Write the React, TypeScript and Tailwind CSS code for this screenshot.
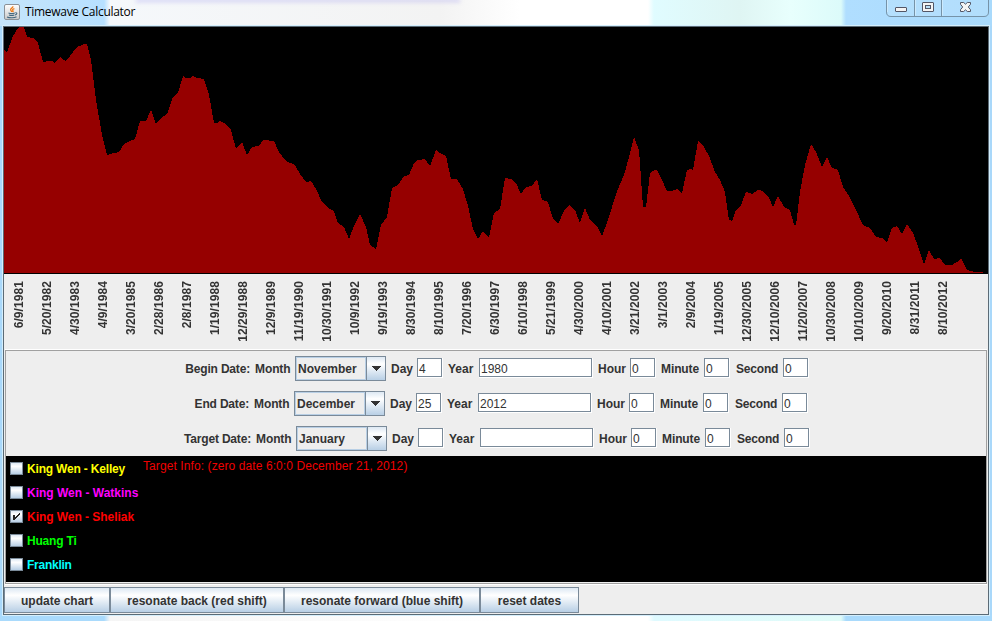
import React from 'react';
import { clsx } from 'clsx';

// Upper edge of the wave, in window coordinates
const WAVE: [number, number][] = [
  [4, 50], [7, 53], [10, 44], [13, 36], [18, 28], [19, 27], [24, 27], [27, 37], [33, 38], [38, 43], [43, 62],
  [48, 61], [52, 61], [55, 63], [60, 57], [62, 59], [66, 61], [70, 56], [77, 47], [82, 45], [84, 44], [87, 44],
  [91, 60], [96, 100], [102, 135], [107, 155], [114, 153], [119, 152], [124, 144], [130, 141], [135, 139],
  [140, 121], [146, 121], [151, 110], [156, 124], [161, 118], [167, 114], [173, 97], [178, 93], [183, 76],
  [186, 78], [190, 78], [193, 76], [197, 78], [204, 79], [209, 95], [214, 123], [217, 123], [220, 121],
  [226, 124], [231, 130], [236, 149], [242, 142], [247, 155], [252, 147], [259, 146], [263, 140], [274, 141],
  [279, 152], [286, 161], [295, 165], [300, 174], [306, 182], [311, 181], [316, 189], [322, 202], [330, 209],
  [334, 211], [338, 223], [344, 227], [349, 239], [354, 226], [360, 214], [366, 227], [370, 245], [376, 249],
  [381, 225], [387, 217], [392, 188], [398, 185], [404, 176], [409, 175], [414, 163], [418, 160], [425, 159],
  [430, 166], [436, 150], [440, 153], [446, 156], [451, 179], [457, 179], [463, 189], [468, 206], [473, 229],
  [478, 239], [483, 231], [489, 238], [494, 213], [500, 209], [505, 178], [511, 179], [516, 183], [521, 194],
  [526, 187], [532, 186], [537, 179], [542, 200], [548, 202], [553, 219], [558, 224], [564, 211], [569, 205],
  [575, 210], [580, 223], [585, 208], [590, 220], [597, 226], [602, 236], [607, 223], [612, 207], [618, 189],
  [624, 175], [629, 157], [634, 137], [639, 150], [643, 207], [646, 207], [650, 173], [655, 170], [657, 170],
  [662, 180], [667, 191], [672, 191], [677, 189], [682, 193], [687, 170], [690, 169], [693, 170], [698, 141],
  [704, 147], [709, 156], [715, 172], [720, 180], [725, 192], [729, 220], [732, 221], [736, 210], [741, 205],
  [746, 192], [752, 194], [758, 190], [763, 191], [769, 198], [773, 207], [778, 196], [784, 207], [790, 210],
  [794, 225], [796, 225], [800, 192], [805, 165], [811, 144], [816, 152], [822, 167], [827, 157], [832, 168],
  [838, 170], [843, 187], [849, 196], [856, 210], [863, 225], [870, 228], [876, 237], [882, 238], [887, 243],
  [892, 228], [897, 226], [902, 234], [907, 224], [913, 233], [919, 249], [924, 264], [929, 250], [934, 259],
  [940, 258], [945, 265], [952, 265], [957, 262], [961, 258], [967, 270], [975, 272], [983, 272],
];

const DATES = [
  '6/9/1981', '5/20/1982', '4/30/1983', '4/9/1984', '3/20/1985', '2/28/1986', '2/8/1987', '1/19/1988',
  '12/29/1988', '12/9/1989', '11/19/1990', '10/30/1991', '10/9/1992', '9/19/1993', '8/30/1994', '8/10/1995',
  '7/20/1996', '6/30/1997', '6/10/1998', '5/21/1999', '4/30/2000', '4/10/2001', '3/21/2002', '3/1/2003',
  '2/9/2004', '1/19/2005', '12/30/2005', '12/10/2006', '11/20/2007', '10/30/2008', '10/10/2009', '9/20/2010',
  '8/31/2011', '8/10/2012',
];

const SERIES = [
  { name: 'King Wen - Kelley', color: 'text-[#ffff00] tracking-[-0.18px]', checked: false },
  { name: 'King Wen - Watkins', color: 'text-[#ff00ff]', checked: false },
  { name: 'King Wen - Sheliak', color: 'text-[#ff0000] tracking-[-0.04px]', checked: true },
  { name: 'Huang Ti', color: 'text-[#00ff00] tracking-[-0.2px]', checked: false },
  { name: 'Franklin', color: 'text-[#00ffff] tracking-[-0.25px]', checked: false },
];

const JavaIcon = () => (
  <svg width="16" height="16" viewBox="0 0 16 16" className="shrink-0">
    <defs>
      <linearGradient id="java" x1="0" y1="0" x2="0" y2="1">
        <stop offset="0" stopColor="#fff" />
        <stop offset="1" stopColor="#c9c9c9" />
      </linearGradient>
    </defs>
    <rect x="0.5" y="0.5" width="15" height="15" rx="1.5" fill="url(#java)" stroke="#8b9197" />
    <path d="M8.800 2.200c.8 1.400-2.600 2.100-2.200 3.700.2.800 1.200 1.200 1.200 2.100M10.400 4.600c-1.600.4-2.200 1.200-1.500 2 .4.600.3 1-.2 1.500" fill="none" stroke="#ee7a14" strokeWidth="1.300" />
    <path d="M4.500 9c2 .7 4.700.6 6.300 0M5 10.900c1.600.6 3.800.6 5.300 0M3 12.900c2.500 1.200 7.500 1.200 9.500-.2M11.300 8.800c2.200-.5 2 1.700-.3 2.200" fill="none" stroke="#44687f" strokeWidth="1.100" />
  </svg>
);

const WindowButtons = () => (
  <svg width="104" height="17" viewBox="0 0 104 17" className="shrink-0">
    <path d="M.5 0V12q0 4.500 4.500 4.500H98q4.500 0 4.500-4.500V0" fill="#c2e5fc" fillOpacity="0.35" stroke="#7693a8" />
    <path d="M28.500 0v16M55.500 0v16" stroke="#7693a8" />
    <path d="M29.500 0v15.500M56.500 0v15.500M1.500 0v12" stroke="#cdeafd" />
    <rect x="9.500" y="7.500" width="11" height="4" rx="0.500" fill="#f4f4f4" stroke="#535666" />
    <rect x="36.500" y="2.500" width="11" height="9" rx="0.500" fill="#f4f4f4" stroke="#535666" />
    <rect x="39.500" y="5.500" width="5" height="3" fill="#b9def6" stroke="#535666" />
    <path d="M74.500 2.500h3.200l1.800 1.700 1.800-1.700h3.200v1.800L82.300 7l2.200 2.700v1.800h-3.200l-1.800-1.700-1.800 1.700h-3.200V9.700L76.700 7l-2.200-2.700z" fill="#f4f4f4" stroke="#535666" />
  </svg>
);

const TitleBar = () => (
  <div className="relative flex h-[26px] shrink-0 items-start justify-between bg-[linear-gradient(90deg,#c5e5fb_0,#b7e0ff_104px,#f5f8fb_110px,#f3f3f3_440px,#fff_520px,#fff_648px,#e0fcff_654px,#dff5f3_740px,#e8fffd_790px,#dcfbfa_841px,#b0deff_846px,#a9dafc_100%)] pl-1">
    {/* page behind the glass */}
    <div className="absolute -top-px left-[136px] h-[3px] w-[324px] bg-[#a9a4f0]/50 blur-[2px]" />
    <div className="flex items-center gap-[5px] pt-1">
      <JavaIcon />
      <span className="font-['Open_Sans'] text-[12px] leading-4 font-normal tracking-[-0.3px] text-black">
        Timewave Calculator
      </span>
    </div>
    <div className="pr-[2px]">
      <WindowButtons />
    </div>
  </div>
);

const WaveChart = () => {
  const outline = WAVE.map(([x, y]) => `${x},${y}`).join(' ');
  return (
    <svg width="984" height="247" viewBox="4 27 984 247" className="block shrink-0 bg-black" shapeRendering="crispEdges">
      <polygon points={`4,273 ${outline} 983,273`} fill="#960000" />
    </svg>
  );
};

const DateAxis = () => (
  <div className="flex h-[76px] shrink-0 pt-[7px] pl-[1px]">
    {DATES.map((date) => (
      <div key={date} className="flex w-7 shrink-0 justify-center">
        <span className="rotate-180 self-start text-[12px] leading-[14px] tracking-[0.08px] whitespace-nowrap [writing-mode:vertical-rl]">
          {date}
        </span>
      </div>
    ))}
  </div>
);

interface FieldProps {
  label: string;
  value: string;
  labelWidth: string;
  wide?: boolean;
}

const Field: React.FC<FieldProps> = ({ label, value, labelWidth, wide = false }) => (
  <>
    <span className={clsx('shrink-0 whitespace-nowrap', labelWidth)}>{label}</span>
    <div
      className={clsx(
        '-mr-px mb-px h-[20px] shrink-0 border-r border-b border-white',
        wide ? 'w-[114px]' : 'w-[26px]'
      )}
    >
      <div className="h-[19px] border border-[#7a8a99] bg-white pl-[1px] text-[12px] leading-[20px] font-normal">
        {value}
      </div>
    </div>
  </>
);

const Combo = ({ value }: { value: string }) => (
  <div className="flex h-[25px] w-[91px] shrink-0 border border-[#7a8a99]">
    <div className="flex-1 border border-[#b8cfe5] pl-px leading-[22px]">{value}</div>
    <div className="flex w-[19px] items-center justify-center border-l border-[#7a8a99] bg-linear-to-b from-[#dde8f3] via-white via-30% to-[#b8cfe5] pr-px">
      <svg width="10" height="5" viewBox="0 0 10 5" shapeRendering="crispEdges">
        <path d="M0 0h10L5 5z" fill="#333" />
      </svg>
    </div>
  </div>
);

interface DateRowProps {
  label: string;
  month: string;
  day: string;
  year: string;
  className?: string;
}

const DateRow: React.FC<DateRowProps> = ({ label, month, day, year, className }) => (
  <div className={clsx('flex h-[25px] items-center gap-[5px]', className)}>
    <span className="w-[80px] shrink-0 text-right tracking-[-0.18px] whitespace-nowrap">{label}</span>
    <span className="w-[35px] shrink-0 tracking-[-0.1px]">Month</span>
    <Combo value={month} />
    <Field label="Day" value={day} labelWidth="w-[21px]" />
    <Field label="Year" value={year} labelWidth="w-[27px] pl-px" wide />
    <Field label="Hour" value="0" labelWidth="w-[28px] pl-px" />
    <Field label="Minute" value="0" labelWidth="w-[39px] pl-px tracking-[-0.1px]" />
    <Field label="Second" value="0" labelWidth="w-[44px] pl-[2px] tracking-[-0.2px]" />
  </div>
);

const CheckBox = ({ checked }: { checked: boolean }) => (
  <span className="flex h-[13px] w-[13px] items-center justify-center border border-[#7a8a99] bg-linear-to-b from-[#dde8f3] via-white via-30% to-[#b8cfe5]">
    {checked && (
      <svg width="9" height="9" viewBox="0 0 9 9" shapeRendering="crispEdges">
        <path d="M1 3h2v2h1V4h1V3h1V2h1V1h1v2H7v1H6v1H5v1H4v1H3v1H1z" fill="#222" />
      </svg>
    )}
  </span>
);

const SeriesPanel = () => (
  <div className="flex h-[126px] shrink-0 bg-black pl-1">
    <div className="w-[133px] shrink-0">
      {SERIES.map(({ name, color, checked }) => (
        <div key={name} className={clsx('flex h-6 items-center gap-1', color)}>
          <CheckBox checked={checked} />
          <span className="pt-px leading-[14px] whitespace-nowrap">{name}</span>
        </div>
      ))}
    </div>
    <span className="pt-[3px] text-[12px] leading-[14px] font-normal tracking-[0.09px] text-[#f00000]">
      Target Info: (zero date 6:0:0 December 21, 2012)
    </span>
  </div>
);

const ActionButton = ({ label, width }: { label: string; width: string }) => (
  <button
    className={clsx(
      'h-[26px] shrink-0 border border-[#7a8a99] bg-linear-to-b from-[#dde8f3] via-white via-30% to-[#b8cfe5] pt-[2px] text-center whitespace-nowrap',
      width
    )}
  >
    {label}
  </button>
);

export default function App() {
  return (
    <div className="flex h-[621px] w-[992px] flex-col overflow-hidden bg-[#a9d8fa] font-['Liberation_Sans',Arial,sans-serif] text-[12px] font-bold text-[#333]">
      <TitleBar />
      <div className="z-10 flex h-[589px] w-[986px] shrink-0 flex-col self-center border border-[#5b6b76] bg-[#eee] shadow-[0_0_0_1px_#d4eefc]">
        <WaveChart />
        <DateAxis />
        <div className="mx-px flex h-[234px] shrink-0 flex-col border border-[#a0a0a0] shadow-[0_1px_0_#fff,0_-1px_0_#fff]">
          <div className="flex h-[105px] shrink-0 flex-col gap-[10px] pt-[5px] pl-[163px]">
            <DateRow label="Begin Date:" month="November" day="4" year="1980" className="ml-px" />
            <DateRow label="End Date:" month="December" day="25" year="2012" />
            <DateRow label="Target Date:" month="January" day="" year="" className="ml-[2px]" />
          </div>
          <SeriesPanel />
        </div>
        <div className="mt-[3px] flex shrink-0">
          <ActionButton label="update chart" width="w-[106px]" />
          <ActionButton label="resonate back (red shift)" width="w-[174px]" />
          <ActionButton label="resonate forward (blue shift)" width="w-[196px]" />
          <ActionButton label="reset dates" width="w-[99px]" />
        </div>
      </div>
      <div className="h-[6px] shrink-0 bg-[linear-gradient(90deg,#a9dafc_0,#a9dafc_104px,#f5f5f5_110px,#fff_520px,#fff_648px,#dffaff_654px,#e0fbf8_841px,#a9dafc_846px)]" />
    </div>
  );
}
